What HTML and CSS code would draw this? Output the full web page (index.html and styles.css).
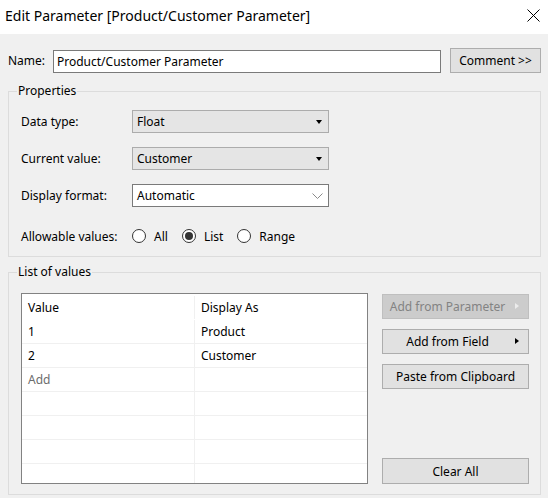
FILE: index.html
```html
<!DOCTYPE html>
<html lang="en">
<head>
    <meta charset="UTF-8">
    <title>Edit Parameter</title>
    <link rel="stylesheet" href="styles.css">
</head>
<body>
    <div class="dialog">
        <!-- Title bar -->
        <div class="titlebar">
            <span class="title">Edit Parameter [Product/Customer Parameter]</span>
            <svg class="close" width="13" height="13" viewBox="0 0 13 13">
                <path d="M0.5 0.5 L12.5 12.5 M12.5 0.5 L0.5 12.5" stroke="#000" stroke-width="1" fill="none"/>
            </svg>
        </div>

        <div class="content">
            <div class="name-row">
                <label for="name">Name:</label>
                <input type="text" id="name" class="text-input" value="Product/Customer Parameter">
                <button class="btn comment-btn">Comment &gt;&gt;</button>
            </div>

            <!-- Properties -->
            <fieldset class="group">
                <legend>Properties</legend>
                <div class="props">
                    <span class="prop-label">Data type:</span>
                    <div class="combo">
                        <span>Float</span>
                        <span class="arrow-down"></span>
                    </div>

                    <span class="prop-label">Current value:</span>
                    <div class="combo">
                        <span>Customer</span>
                        <span class="arrow-down"></span>
                    </div>

                    <span class="prop-label">Display format:</span>
                    <div class="combo combo-edit">
                        <span>Automatic</span>
                        <svg class="chevron" width="11" height="6" viewBox="0 0 11 6">
                            <path d="M0.5 0.5 L5.5 5.5 L10.5 0.5" stroke="#8a8a8a" stroke-width="1" fill="none"/>
                        </svg>
                    </div>

                    <span class="prop-label">Allowable values:</span>
                    <div class="radios">
                        <span class="radio"></span><span class="radio-text">All</span>
                        <span class="radio checked"></span><span class="radio-text">List</span>
                        <span class="radio"></span><span class="radio-text">Range</span>
                    </div>
                </div>
            </fieldset>

            <!-- List of values -->
            <fieldset class="group list-group">
                <legend>List of values</legend>
                <div class="list-body">
                    <div class="grid">
                        <div class="row head">
                            <div class="cell">Value</div>
                            <div class="cell">Display As</div>
                        </div>
                        <div class="row">
                            <div class="cell">1</div>
                            <div class="cell">Product</div>
                        </div>
                        <div class="row">
                            <div class="cell">2</div>
                            <div class="cell">Customer</div>
                        </div>
                        <div class="row">
                            <div class="cell placeholder">Add</div>
                            <div class="cell"></div>
                        </div>
                        <div class="row"><div class="cell"></div><div class="cell"></div></div>
                        <div class="row"><div class="cell"></div><div class="cell"></div></div>
                        <div class="row"><div class="cell"></div><div class="cell"></div></div>
                        <div class="row"><div class="cell"></div><div class="cell"></div></div>
                    </div>

                    <div class="side-buttons">
                        <button class="btn side-btn disabled">Add from Parameter<span class="arrow-right"></span></button>
                        <button class="btn side-btn">Add from Field<span class="arrow-right"></span></button>
                        <button class="btn side-btn plain">Paste from Clipboard</button>
                        <button class="btn side-btn plain clear-btn">Clear All</button>
                    </div>
                </div>
            </fieldset>
        </div>
    </div>
</body>
</html>
```

FILE: styles.css
```css
body {
    margin: 0;
    font-family: "Noto Sans", "Open Sans", sans-serif;
    font-size: 12px;
    color: #000;
    background-color: #f0f0f0;
}
.dialog {
    width: 548px;
    height: 498px;
    overflow: hidden;
}
.titlebar {
    height: 34px;
    background-color: #fff;
    display: flex;
    align-items: center;
    justify-content: space-between;
    padding: 0 8px 0 5px;
    box-sizing: border-box;
}
.title {
    font-size: 14px;
    margin-top: -3px;
}
.close {
    margin-top: -3px;
}
.content {
    padding: 14px 7px 0 8px;
}
.name-row {
    display: flex;
    align-items: center;
    height: 25px;
}
.name-row label {
    width: 45px;
}
.text-input {
    width: 388px;
    height: 23px;
    box-sizing: border-box;
    border: 1px solid #7a7a7a;
    padding: 0 3px;
    font: inherit;
    color: #000;
    outline: none;
    margin-top: 2px;
}
.btn {
    font: inherit;
    color: #000;
    background-color: #e1e1e1;
    border: 1px solid #adadad;
    padding: 0;
    height: 25px;
    box-sizing: border-box;
}
.comment-btn {
    width: 91px;
    margin-left: 9px;
}
.group {
    margin: 10px 0 0;
    padding: 0;
    border: 1px solid #dcdcdc;
    min-width: 0;
}
.group legend {
    margin-left: 8px;
    padding: 0 1px;
    line-height: 16px;
}
.props {
    display: grid;
    grid-template-columns: 111px 197px;
    grid-template-rows: 23px 23px 23px 30px;
    row-gap: 14px;
    align-items: center;
    padding: 11px 0 5px 12px;
}
.combo {
    height: 23px;
    box-sizing: border-box;
    border: 1px solid #acacac;
    background-color: #e5e5e5;
    display: flex;
    align-items: center;
    justify-content: space-between;
    padding: 0 6px 0 4px;
}
.combo-edit {
    background-color: #fff;
    border-color: #7a7a7a;
    padding-right: 5px;
}
.arrow-down {
    width: 0;
    height: 0;
    border-left: 3.5px solid transparent;
    border-right: 3.5px solid transparent;
    border-top: 4px solid #000;
}
.radios {
    display: flex;
    align-items: center;
}
.radio {
    width: 14px;
    height: 14px;
    box-sizing: border-box;
    border: 1px solid #333;
    border-radius: 50%;
    background-color: #fff;
    position: relative;
}
.radio.checked::after {
    content: "";
    position: absolute;
    left: 2px;
    top: 2px;
    width: 8px;
    height: 8px;
    border-radius: 50%;
    background-color: #333;
}
.radio-text {
    margin: 0 14px 0 8px;
}
.list-group {
    margin-top: 7px;
}
.list-body {
    display: flex;
    justify-content: space-between;
    padding: 13px 11px 10px 12px;
}
.grid {
    width: 347px;
    height: 191px;
    box-sizing: border-box;
    border: 1px solid #828282;
    background-color: #fff;
    padding-top: 2px;
    overflow: hidden;
}
.row {
    display: grid;
    grid-template-columns: 172px 1fr;
    height: 24px;
    box-sizing: border-box;
    border-bottom: 1px solid #f0f0f0;
}
.row.head {
    border-bottom-color: #fff;
}
.cell {
    padding-left: 6px;
    line-height: 23px;
}
.cell + .cell {
    border-left: 1px solid #f0f0f0;
}
.placeholder {
    color: #6d6d6d;
}
.side-buttons {
    width: 147px;
    display: flex;
    flex-direction: column;
    gap: 10px;
    padding-top: 1px;
}
.side-btn {
    position: relative;
    padding-right: 16px;
}
.side-btn.plain {
    padding-right: 0;
}
.side-btn.disabled {
    background-color: #cccccc;
    border-color: #bfbfbf;
    color: #838383;
}
.arrow-right {
    position: absolute;
    right: 9px;
    top: 8px;
    width: 0;
    height: 0;
    border-top: 3.5px solid transparent;
    border-bottom: 3.5px solid transparent;
    border-left: 4px solid #000;
}
.disabled .arrow-right {
    border-left-color: #ececec;
}
.clear-btn {
    margin-top: auto;
    height: 26px;
}
```
